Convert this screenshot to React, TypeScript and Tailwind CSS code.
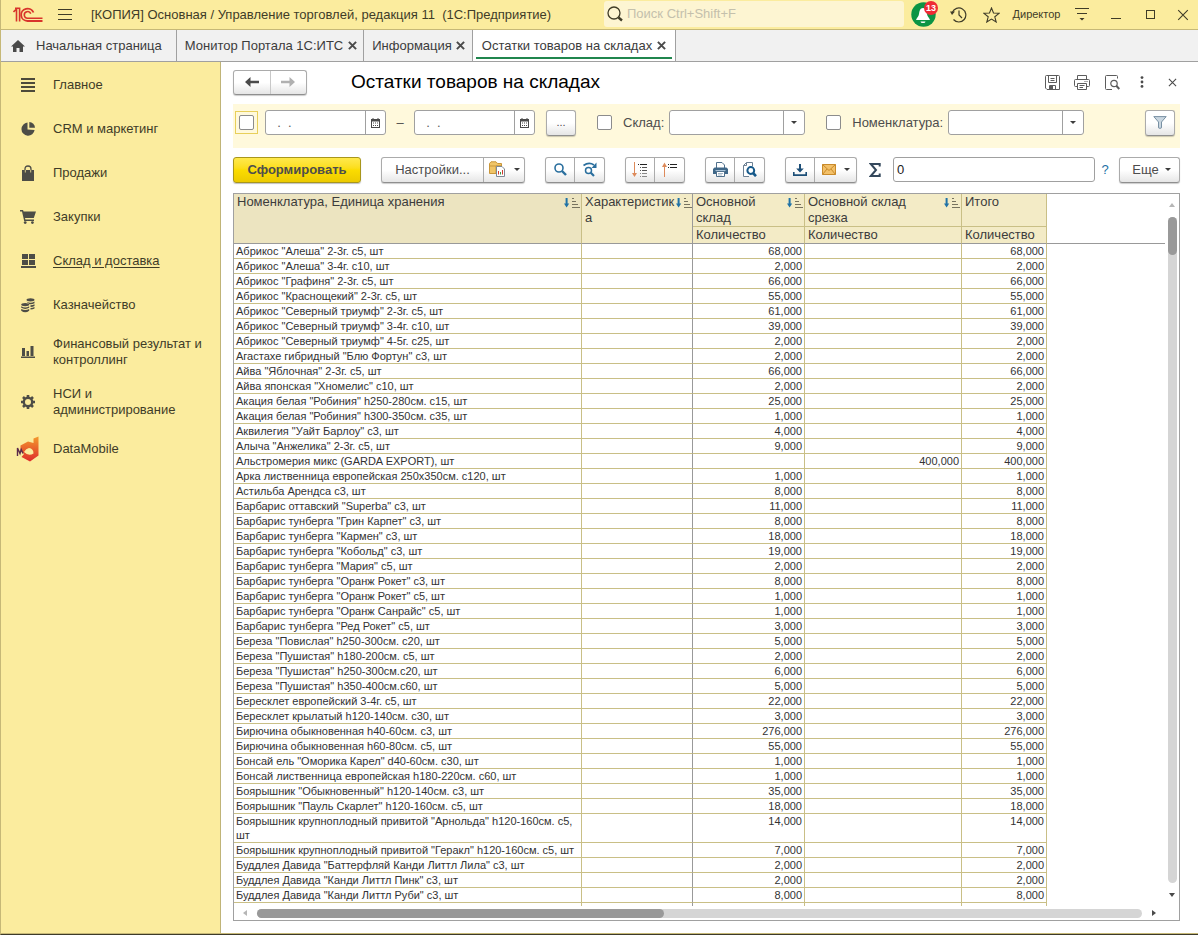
import type { ReactNode } from "react";
import clsx from "clsx";

type Row = [name: string, main: string, cut: string, total: string];

const rows: Row[] = [
  ['Абрикос "Алеша" 2-3г. с5, шт', "68,000", "", "68,000"],
  ['Абрикос "Алеша" 3-4г. с10, шт', "2,000", "", "2,000"],
  ['Абрикос "Графиня" 2-3г. с5, шт', "66,000", "", "66,000"],
  ['Абрикос "Краснощекий" 2-3г. с5, шт', "55,000", "", "55,000"],
  ['Абрикос "Северный триумф" 2-3г. с5, шт', "61,000", "", "61,000"],
  ['Абрикос "Северный триумф" 3-4г. с10, шт', "39,000", "", "39,000"],
  ['Абрикос "Северный триумф" 4-5г. с25, шт', "2,000", "", "2,000"],
  ['Агастахе гибридный "Блю Фортун" с3, шт', "2,000", "", "2,000"],
  ['Айва "Яблочная" 2-3г. с5, шт', "66,000", "", "66,000"],
  ['Айва японская "Хномелис" с10, шт', "2,000", "", "2,000"],
  ['Акация белая "Робиния" h250-280см. с15, шт', "25,000", "", "25,000"],
  ['Акация белая "Робиния" h300-350см. с35, шт', "1,000", "", "1,000"],
  ['Аквилегия "Уайт Барлоу" с3, шт', "4,000", "", "4,000"],
  ['Алыча "Анжелика" 2-3г. с5, шт', "9,000", "", "9,000"],
  ["Альстромерия микс (GARDA EXPORT), шт", "", "400,000", "400,000"],
  ["Арка лиственница европейская 250х350см. с120, шт", "1,000", "", "1,000"],
  ["Астильба Арендса с3, шт", "8,000", "", "8,000"],
  ['Барбарис оттавский "Superba" с3, шт', "11,000", "", "11,000"],
  ['Барбарис тунберга "Грин Карпет" с3, шт', "8,000", "", "8,000"],
  ['Барбарис тунберга "Кармен" с3, шт', "18,000", "", "18,000"],
  ['Барбарис тунберга "Кобольд" с3, шт', "19,000", "", "19,000"],
  ['Барбарис тунберга "Мария" с5, шт', "2,000", "", "2,000"],
  ['Барбарис тунберга "Оранж Рокет" с3, шт', "8,000", "", "8,000"],
  ['Барбарис тунберга "Оранж Рокет" с5, шт', "1,000", "", "1,000"],
  ['Барбарис тунберга "Оранж Санрайс" с5, шт', "1,000", "", "1,000"],
  ['Барбарис тунберга "Ред Рокет" с5, шт', "3,000", "", "3,000"],
  ['Береза "Повислая" h250-300см. с20, шт', "5,000", "", "5,000"],
  ['Береза "Пушистая" h180-200см. с5, шт', "2,000", "", "2,000"],
  ['Береза "Пушистая" h250-300см.с20, шт', "6,000", "", "6,000"],
  ['Береза "Пушистая" h350-400см.с60, шт', "5,000", "", "5,000"],
  ["Бересклет европейский 3-4г. с5, шт", "22,000", "", "22,000"],
  ["Бересклет крылатый h120-140см. с30, шт", "3,000", "", "3,000"],
  ["Бирючина обыкновенная h40-60см. с3, шт", "276,000", "", "276,000"],
  ["Бирючина обыкновенная h60-80см. с5, шт", "55,000", "", "55,000"],
  ['Бонсай ель "Оморика Карел" d40-60см. с30, шт', "1,000", "", "1,000"],
  ["Бонсай лиственница европейская h180-220см. с60, шт", "1,000", "", "1,000"],
  ['Боярышник "Обыкновенный" h120-140см. с3, шт', "35,000", "", "35,000"],
  ['Боярышник "Пауль Скарлет" h120-160см. с5, шт', "18,000", "", "18,000"],
  ['Боярышник крупноплодный привитой "Арнольда" h120-160см. с5, шт', "14,000", "", "14,000"],
  ['Боярышник крупноплодный привитой "Геракл" h120-160см. с5, шт', "7,000", "", "7,000"],
  ['Буддлея Давида "Баттерфляй Канди Литтл Лила" с3, шт', "2,000", "", "2,000"],
  ['Буддлея Давида "Канди Литтл Пинк" с3, шт', "2,000", "", "2,000"],
  ['Буддлея Давида "Канди Литтл Руби" с3, шт', "8,000", "", "8,000"],
  ["", "", "", ""],
];

const buttonFace =
  "border border-[#ababab] border-b-[#8f8f8f] bg-gradient-to-b from-white from-50% to-[#e6e6e6] shadow-[0_1px_1px_rgba(0,0,0,0.2)]";

/* ---------- icons ---------- */

function Logo() {
  return (
    <svg width="30" height="16" viewBox="0 0 30 16" fill="none" stroke="#d8342b">
      <path d="M0.5 5 L3.5 2.2 V14.5 M2 1.2 H6.6 V14.5" strokeWidth="1.6" />
      <path d="M20.5 5.5 A6.4 6.2 0 1 0 14.5 14 H29.5" strokeWidth="1.8" />
      <path d="M17.8 6.6 A3.4 3.3 0 1 0 14.5 11.2 H29.5" strokeWidth="1.6" />
    </svg>
  );
}

function MenuLines() {
  return (
    <svg width="14" height="12" viewBox="0 0 14 12" stroke="#3f3c28" strokeWidth="1">
      <path d="M0 0.5 H14 M0 5.5 H14 M0 10.5 H14" />
    </svg>
  );
}

function SearchGlass() {
  return (
    <svg width="16" height="16" viewBox="0 0 16 16" fill="none" stroke="#3f3c28">
      <circle cx="7" cy="7" r="6" strokeWidth="1.3" />
      <path d="M11.5 11.5 L15 14.5" strokeWidth="2.4" />
    </svg>
  );
}

function Bell() {
  return (
    <svg width="25" height="25" viewBox="0 0 25 25">
      <circle cx="12.5" cy="12.5" r="12.2" fill="#0c9444" />
      <path d="M12 6 C9 6 8.5 9 8 12 C7.6 14.5 6 15.5 5 18 H19 C18 15.5 16.4 14.5 16 12 C15.5 9 15 6 12 6 Z" fill="#fff" />
      <path d="M9.5 19.5 H14.5 A2.5 1.6 0 0 1 9.5 19.5 Z" fill="#fff" />
    </svg>
  );
}

function History() {
  return (
    <svg width="17" height="16" viewBox="0 0 17 16" fill="none" stroke="#3f3c28" strokeWidth="1.2">
      <path d="M2.3 5.5 A7 7 0 1 1 3.5 12.5" />
      <path d="M9 3.5 V8 L12 11" />
      <path d="M0 4.5 L5 4.5 L2 8 Z" fill="#3f3c28" stroke="none" />
    </svg>
  );
}

function Star() {
  return (
    <svg width="17" height="16" viewBox="0 0 17 16" fill="none" stroke="#3f3c28" strokeWidth="1.1">
      <path d="M8.5 1 L10.5 6 L16 6.3 L11.8 9.8 L13.2 15 L8.5 12.1 L3.8 15 L5.2 9.8 L1 6.3 L6.5 6 Z" />
    </svg>
  );
}

function ServiceMenu() {
  return (
    <svg width="14" height="13" viewBox="0 0 14 13" fill="#3f3c28">
      <path d="M0 0 H14 V1 H0 Z M2 5 H12 V6 H2 Z M4.5 10 H9.5 L7 12.5 Z" />
    </svg>
  );
}

function Cross({ size, color, width }: { size: number; color: string; width: number }) {
  return (
    <svg width={size} height={size} viewBox="0 0 10 10" stroke={color} strokeWidth={width}>
      <path d="M1 1 L9 9 M9 1 L1 9" />
    </svg>
  );
}

function HomeIcon() {
  return (
    <svg width="14" height="12" viewBox="0 0 14 12" fill="#4a4a4a">
      <path d="M7 0 L14 6.4 H12 V12 H8.5 V8 H5.5 V12 H2 V6.4 H0 Z" />
    </svg>
  );
}

function Caret({ className }: { className?: string }) {
  return (
    <svg width="6" height="3" viewBox="0 0 6 3" fill="#3c3c3c" className={className}>
      <path d="M0 0 H6 L3 3 Z" />
    </svg>
  );
}

function ScrollArrow({ className }: { className?: string }) {
  return (
    <svg width="6" height="4" viewBox="0 0 6 4" fill="#4a4a4a" className={className}>
      <path d="M0 0 H6 L3 4 Z" />
    </svg>
  );
}

function Arrow({ color, flip }: { color: string; flip?: boolean }) {
  return (
    <svg width="14" height="10" viewBox="0 0 14 10" fill={color} className={flip ? "rotate-180" : ""}>
      <path d="M0 5 L5.5 0 V3.8 H14 V6.2 H5.5 V10 Z" />
    </svg>
  );
}

function SaveDisk() {
  return (
    <svg width="15" height="15" viewBox="0 0 15 15" fill="none" stroke="#5c5c5c">
      <path d="M0.5 1.5 Q0.5 0.5 1.5 0.5 H13.5 Q14.5 0.5 14.5 1.5 V14.5 H2 L0.5 13 Z" />
      <path d="M3.5 0.5 V7.5 H11.5 V0.5 M5.5 3.5 H9.5 M5.5 5.5 H9.5 M4.5 14 V10.5 H10.5 V14" />
      <path d="M5 11 H8 V14 H5 Z" fill="#5c5c5c" stroke="none" />
    </svg>
  );
}

function PrinterOutline() {
  return (
    <svg width="16" height="15" viewBox="0 0 16 15" fill="none" stroke="#5c5c5c">
      <path d="M3.5 4 V0.5 H12.5 V4" />
      <path d="M3 11.5 H1.5 Q0.5 11.5 0.5 10.5 V5.5 Q0.5 4.5 1.5 4.5 H14.5 Q15.5 4.5 15.5 5.5 V10.5 Q15.5 11.5 14.5 11.5 H13" />
      <path d="M3.5 8.5 H12.5 V14.5 H3.5 Z M5.5 10.5 H10.5 M5.5 12.5 H9 M10.5 6.5 H11.5 M12.5 6.5 H13.5" />
    </svg>
  );
}

function PreviewOutline() {
  return (
    <svg width="15" height="15" viewBox="0 0 15 15" fill="none" stroke="#5c5c5c">
      <path d="M7 14.5 H1.5 Q0.5 14.5 0.5 13.5 V1.5 Q0.5 0.5 1.5 0.5 H11.5 Q12.5 0.5 12.5 1.5 V3.5" />
      <circle cx="9" cy="8.5" r="3.2" strokeWidth="1.2" />
      <path d="M11.3 10.8 L14.3 14" strokeWidth="2" />
    </svg>
  );
}

function Dots() {
  return (
    <svg width="4" height="12" viewBox="0 0 4 12" fill="#4a4a4a">
      <circle cx="2" cy="1.6" r="1.4" />
      <circle cx="2" cy="6" r="1.4" />
      <circle cx="2" cy="10.4" r="1.4" />
    </svg>
  );
}

function CalendarIcon() {
  return (
    <svg width="9" height="10" viewBox="0 0 9 10">
      <path d="M0 1 H9 V10 H0 Z M1.5 0 H2.5 V1 H1.5 Z M6.5 0 H7.5 V1 H6.5 Z" fill="#4a4a4a" />
      <path d="M1 3.5 H8 V9 H1 Z" fill="#fff" />
      <path d="M2 5 H7 M2 7.5 H7" stroke="#4a4a4a" strokeDasharray="1 1" />
    </svg>
  );
}

function ReportVariants() {
  return (
    <svg width="17" height="17" viewBox="0 0 17 17">
      <path d="M0.5 2.5 L2 0.8 H7 L8.5 2.5 H12.5 V5 H7 V12.5 H0.5 Z" fill="#f0c568" stroke="#c9963a" />
      <path d="M1 5 H12" stroke="#c9963a" />
      <path d="M7.5 5.5 H13 L15.5 8 V15.5 H7.5 Z" fill="#fff" stroke="#7d8894" />
      <path d="M9.5 10 V13.5 M13.5 9 V13.5" stroke="#d23c2e" />
      <path d="M11.5 11 V13.5" stroke="#3a9a48" />
    </svg>
  );
}

function Find() {
  return (
    <svg width="13" height="13" viewBox="0 0 13 13" fill="none" stroke="#2a6f9e">
      <circle cx="5" cy="5" r="4" strokeWidth="1.6" />
      <path d="M8 8 L12 12" strokeWidth="2.4" />
    </svg>
  );
}

function FindNext() {
  return (
    <svg width="14" height="15" viewBox="0 0 14 15" fill="none" stroke="#2a6f9e">
      <circle cx="5.5" cy="8.5" r="3" strokeWidth="1.5" />
      <path d="M7.8 10.8 L11 14" strokeWidth="2.2" />
      <path d="M0.5 3.5 Q6 -0.5 11 3" strokeWidth="1.6" />
      <path d="M13.5 0.5 V6 H8.5 Z" fill="#2a6f9e" stroke="none" />
    </svg>
  );
}

function ExpandGroups() {
  return (
    <svg width="16" height="16" viewBox="0 0 16 16" fill="none">
      <path d="M2.5 0 V13" stroke="#dd8a5a" />
      <path d="M0 11 H5 L2.5 15 Z" fill="#dd8a5a" />
      <path d="M6 2.5 H7 M8 2.5 H15" stroke="#222" />
      <path d="M8 5.5 H9 M10 5.5 H15 M8 8.5 H9 M10 8.5 H15" stroke="#555" />
      <path d="M8 11.5 H9 M10 11.5 H15 M8 14.5 H9 M10 14.5 H15" stroke="#888" />
    </svg>
  );
}

function CollapseGroups() {
  return (
    <svg width="16" height="16" viewBox="0 0 16 16" fill="none">
      <path d="M2.5 3 V15" stroke="#dd8a5a" />
      <path d="M0 5 H5 L2.5 0.5 Z" fill="#dd8a5a" />
      <path d="M6 2.5 H7 M8 2.5 H15 M6 5.5 H7 M8 5.5 H15" stroke="#222" />
    </svg>
  );
}

function Printer() {
  return (
    <svg width="15" height="15" viewBox="0 0 15 15">
      <path d="M3.5 6 V0.5 H9 L11.5 3 V6" fill="#fff" stroke="#50708c" />
      <path d="M1.5 5.5 H13.5 L15 7 V12 H0 V7 Z" fill="#3f6788" />
      <path d="M2.5 8.5 H12.5" stroke="#a9c2d6" />
      <path d="M3.5 9.5 H11.5 V14.5 H3.5 Z" fill="#fff" stroke="#50708c" />
      <path d="M5 11.5 H10 M5 13 H9" stroke="#8da4b7" strokeWidth="0.8" />
    </svg>
  );
}

function Preview() {
  return (
    <svg width="15" height="15" viewBox="0 0 15 15" fill="none">
      <path d="M7 14.5 H1.5 V3.5 L4.5 0.5 H10.5 V4" fill="#fff" stroke="#6d8194" />
      <path d="M4.5 0.5 V3.5 H1.5" stroke="#6d8194" />
      <circle cx="8.8" cy="8.5" r="3.4" fill="#fff" stroke="#16598a" strokeWidth="2" />
      <path d="M11 11 L14 14.2" stroke="#16598a" strokeWidth="2.6" />
    </svg>
  );
}

function Download() {
  return (
    <svg width="14" height="12" viewBox="0 0 14 12" fill="#1d4f78">
      <path d="M6 0 H8 V4.5 H10.8 L7 8.5 L3.2 4.5 H6 Z" />
      <path d="M0 8 H1.6 V10.2 H12.4 V8 H14 V12 H0 Z" />
    </svg>
  );
}

function Envelope() {
  return (
    <svg width="14" height="11" viewBox="0 0 14 11" fill="none" stroke="#c98a2a">
      <path d="M0.5 0.5 H13.5 V10.5 H0.5 Z" fill="#f3c068" />
      <path d="M0.5 0.5 L7 6.5 L13.5 0.5 M0.5 10.5 L5 5 M13.5 10.5 L9 5" />
    </svg>
  );
}

function Sigma() {
  return (
    <svg width="12" height="14" viewBox="0 0 12 14" fill="none" stroke="#34485c" strokeWidth="2">
      <path d="M10.7 3.5 V1 H1.8 L7 7 L1.8 13 H10.7 V10.5" />
    </svg>
  );
}

function Funnel() {
  return (
    <svg width="14" height="13" viewBox="0 0 14 13" fill="#c9d6e0" stroke="#7890a3">
      <path d="M0.8 0.6 H13.2 L8.5 6 V11.8 Q7 13 5.5 11.8 V6 Z" />
    </svg>
  );
}

function SortMark() {
  return (
    <svg width="16" height="10" viewBox="0 0 16 10" className="mt-1 shrink-0">
      <path d="M1.6 0 H3.6 V5.5 H5.2 L2.6 9.5 L0 5.5 H1.6 Z" fill="#2072a6" />
      <path d="M8 0.5 H10 M8 3.5 H12 M8 6.5 H14 M8 9.5 H16" stroke="#77735f" />
    </svg>
  );
}

function ListGlyph() {
  return (
    <svg width="14" height="14" viewBox="0 0 14 14" stroke="#4d4a3a" strokeWidth="2">
      <path d="M0 1 H14 M0 5 H14 M0 9 H14 M0 13 H14" />
    </svg>
  );
}

function PieGlyph() {
  return (
    <svg width="14" height="14" viewBox="0 0 14 14" fill="#4d4d46">
      <path d="M6.5 0.5 A6.6 6.6 0 1 0 13.6 8 L6.5 7.6 Z" />
      <path d="M8.3 0 A6 6 0 0 1 14 5.7 H8.3 Z" />
    </svg>
  );
}

function BagGlyph() {
  return (
    <svg width="14" height="16" viewBox="0 0 14 16" fill="none">
      <path d="M1 5 H13 V16 H1 Z" fill="#4d4d46" />
      <path d="M4 8 V4 Q4 1 7 1 Q10 1 10 4 V8" stroke="#4d4d46" strokeWidth="1.3" />
      <path d="M4.3 5 V7.5 M9.7 5 V7.5" stroke="#fbec9e" strokeWidth="0.8" />
    </svg>
  );
}

function CartGlyph() {
  return (
    <svg width="16" height="14" viewBox="0 0 16 14" fill="#4d4d46">
      <path d="M0 0 H3 L3.6 1.5 H16 L13.8 8 H5 L5.4 9.5 H14 V11 H4.2 L2 1.5 H0 Z" />
      <circle cx="5.2" cy="12.6" r="1.4" />
      <circle cx="12.4" cy="12.6" r="1.4" />
    </svg>
  );
}

function StockGlyph() {
  return (
    <svg width="15" height="14" viewBox="0 0 15 14" fill="#4d4d46">
      <path d="M1 0 H7 V5 H1 Z M8 0 H14 V5 H8 Z M1 6 H7 V11 H1 Z M8 6 H14 V11 H8 Z M0 12 H15 V14 H0 Z" />
    </svg>
  );
}

function CoinsGlyph() {
  return (
    <svg width="14" height="15" viewBox="0 0 14 15" fill="#4d4d46">
      <ellipse cx="9.5" cy="1.8" rx="4" ry="1.6" />
      <path d="M5.5 3.4 Q9.5 6 13.5 3.4 V5.2 Q11 6.6 8.5 6.2 L7 5 Z M9.5 7.2 Q12 7.2 13.5 6.2 V8 Q12 9 9.5 9 Z M9.5 10 Q12 10 13.5 9 V10.6 Q12 11.6 9.5 11.6 Z" />
      <ellipse cx="4.2" cy="6.6" rx="4" ry="1.6" />
      <path d="M0.2 8.2 Q4.2 10.6 8.2 8.2 V9.8 Q4.2 12 0.2 9.8 Z M0.2 10.9 Q4.2 13.2 8.2 10.9 V12.8 Q4.2 15.8 0.2 12.8 Z" />
    </svg>
  );
}

function BarsGlyph() {
  return (
    <svg width="14" height="12" viewBox="0 0 14 12" fill="#4d4d46">
      <path d="M1 2 H4 V10 H1 Z M5.5 5 H8 V10 H5.5 Z M9.5 0 H12.5 V10 H9.5 Z M0 10.5 H14 V12 H0 Z" />
    </svg>
  );
}

function GearGlyph() {
  return (
    <svg width="14" height="14" viewBox="0 0 14 14" fill="none" stroke="#4d4d46">
      <circle cx="7" cy="7" r="4.2" strokeWidth="2.4" />
      <path
        d="M7 0 V2.4 M7 11.6 V14 M0 7 H2.4 M11.6 7 H14 M2 2 L3.8 3.8 M10.2 10.2 L12 12 M12 2 L10.2 3.8 M3.8 10.2 L2 12"
        strokeWidth="2.6"
      />
    </svg>
  );
}

function DataMobileLogo() {
  return (
    <svg width="24" height="26" viewBox="0 0 24 26">
      <defs>
        <linearGradient id="dm" x1="0" y1="0" x2="0" y2="1">
          <stop offset="0" stopColor="#f39a2d" />
          <stop offset="1" stopColor="#de2b2b" />
        </linearGradient>
      </defs>
      <path
        d="M17.5 2.5 L22.5 0.5 V19.5 L14 25.5 L5.5 21 L8 18 L4.5 14 V9.5 L12 5.5 L17.5 7 Z M8 16 Q12.5 20.5 17.5 17.5 Q17.5 12.5 13 12 Q10 12.5 8 16 Z"
        fill="url(#dm)"
        fillRule="evenodd"
      />
      <path d="M1.5 20 V12 L4 17.5 L5.2 13.5 L7 17.5" fill="none" stroke="#5b2a4a" strokeWidth="1.4" />
    </svg>
  );
}

/* ---------- controls ---------- */

function IconButton({ label, className, children }: { label: string; className: string; children: ReactNode }) {
  return (
    <button type="button" aria-label={label} className={clsx("flex items-center justify-center", className)}>
      {children}
    </button>
  );
}

function ButtonGroup({ children }: { children: ReactNode }) {
  return (
    <div className={clsx("flex h-[26px] shrink-0 divide-x divide-[#ababab] rounded-[3px]", buttonFace)}>
      {children}
    </div>
  );
}

function DateField({ label }: { label: string }) {
  return (
    <div className="flex h-[25px] w-[121px] rounded-[3px] border border-[#a0a0a0] bg-white">
      <input aria-label={label} defaultValue="  .  ." className="min-w-0 flex-1 pl-1 text-[13px] text-[#5c5c5c] outline-none" />
      <IconButton label="Выбрать дату" className="w-5 border-l border-[#a0a0a0]">
        <CalendarIcon />
      </IconButton>
    </div>
  );
}

function FilterSelect({ id, label }: { id: string; label: string }) {
  return (
    <div className="flex items-center">
      <input
        type="checkbox"
        aria-label={`Отбор: ${label}`}
        className="mr-[11px] size-[15px] appearance-none rounded-xs border border-[#8c8c8c] bg-white"
      />
      <label htmlFor={id} className="mr-[5px]">
        {label}:
      </label>
      <div className="relative">
        <select
          id={id}
          className="block h-[25px] w-[136px] appearance-none rounded-[3px] border border-[#a0a0a0] bg-white px-1 outline-none"
        >
          <option value="" />
        </select>
        <span className="pointer-events-none absolute inset-y-px right-px flex w-[21px] items-center justify-center border-l border-[#a0a0a0]">
          <Caret />
        </span>
      </div>
    </div>
  );
}

/* ---------- page parts ---------- */

function TitleBar() {
  return (
    <header className="flex h-[30px] shrink-0 items-center border-b border-[#c6b877] bg-[#fbec9e] text-[#3f3c28]">
      <div className="flex min-w-0 flex-1 items-center pl-3">
        <Logo />
        <IconButton label="Главное меню" className="mr-[19px] ml-[15px]">
          <MenuLines />
        </IconButton>
        <span className="truncate whitespace-pre">
          [КОПИЯ] Основная / Управление торговлей, редакция 11  (1С:Предприятие)
        </span>
      </div>
      <label className="mb-px flex h-[26px] w-[300px] items-center gap-1 rounded-[3px] bg-[#fdf5d2] pl-[3px]">
        <SearchGlass />
        <input
          type="search"
          aria-label="Поиск"
          placeholder="Поиск Ctrl+Shift+F"
          className="min-w-0 flex-1 outline-none placeholder:text-[#c4c0ac]"
        />
      </label>
      <div className="flex h-full items-center">
        <button type="button" aria-label="Уведомления" className="relative flex w-[38px] justify-center">
          <Bell />
          <span className="absolute -top-px right-1 flex size-[14px] items-center justify-center rounded-full bg-[#ee2b34] text-[9px] leading-none font-bold text-white">
            13
          </span>
        </button>
        <IconButton label="История" className="w-[32px]">
          <History />
        </IconButton>
        <IconButton label="Избранное" className="w-[34px]">
          <Star />
        </IconButton>
        <button type="button" className="w-[57px] text-[11px]">
          Директор
        </button>
        <IconButton label="Сервис" className="w-[34px]">
          <ServiceMenu />
        </IconButton>
        <IconButton label="Свернуть" className="w-[34px]">
          <span className="mt-2 h-px w-[10px] bg-[#3f3c28]" />
        </IconButton>
        <IconButton label="Развернуть" className="w-[34px]">
          <span className="size-[9px] border border-[#3f3c28]" />
        </IconButton>
        <IconButton label="Закрыть" className="w-[31px]">
          <Cross size={12} color="#3f3c28" width={0.9} />
        </IconButton>
      </div>
    </header>
  );
}

function Tab({ title, active }: { title: string; active?: boolean }) {
  return (
    <div
      className={clsx(
        "relative flex items-center gap-1 border-r border-[#a0a0a0]",
        active ? "bg-white px-[9px]" : "pr-[6px] pl-2",
      )}
    >
      <a href="#">{title}</a>
      <IconButton label={`Закрыть: ${title}`} className="w-[10px]">
        <Cross size={9} color="#4a4a4a" width={2.2} />
      </IconButton>
      {active && <span className="absolute inset-x-[3px] bottom-[2px] h-[2px] bg-[#20864e]" />}
    </div>
  );
}

function Tabs() {
  return (
    <nav className="flex h-8 shrink-0 border-b border-[#a0a0a0] bg-[#f1f1f1] text-[#3c3c3c]">
      <a href="#" className="flex items-center gap-[11px] border-r border-[#a0a0a0] pr-[14px] pl-[10px]">
        <HomeIcon />
        Начальная страница
      </a>
      <Tab title="Монитор Портала 1С:ИТС" />
      <Tab title="Информация" />
      <Tab title="Остатки товаров на складах" active />
    </nav>
  );
}

const sections: { title: string; icon: ReactNode; current?: boolean }[] = [
  { title: "Главное", icon: <ListGlyph /> },
  { title: "CRM и маркетинг", icon: <PieGlyph /> },
  { title: "Продажи", icon: <BagGlyph /> },
  { title: "Закупки", icon: <CartGlyph /> },
  { title: "Склад и доставка", icon: <StockGlyph />, current: true },
  { title: "Казначейство", icon: <CoinsGlyph /> },
  { title: "Финансовый результат и контроллинг", icon: <BarsGlyph /> },
  { title: "НСИ и администрирование", icon: <GearGlyph /> },
  { title: "DataMobile", icon: <DataMobileLogo /> },
];

function Sidebar() {
  return (
    <aside className="w-[220px] shrink-0 border-r border-[#c0b478] bg-[#fbec9e] pt-px">
      {sections.map((s) => (
        <a key={s.title} href="#" className="flex min-h-11 items-center py-[9px] pr-3 leading-4 text-[#3f3c28]">
          <span className="-my-1 flex w-[52px] shrink-0 justify-center pl-[2px]">{s.icon}</span>
          <span className={clsx(s.current && "underline underline-offset-2")}>{s.title}</span>
        </a>
      ))}
    </aside>
  );
}

function FormHeader() {
  return (
    <div className="flex h-[42px] shrink-0 items-center pr-[11px] pb-[2px]">
      <div className={clsx("flex h-[25px] w-[74px] divide-x divide-[#c8c8c8] rounded-[3px]", buttonFace)}>
        <IconButton label="Назад" className="flex-1">
          <Arrow color="#4a4a4a" />
        </IconButton>
        <IconButton label="Вперед" className="flex-1">
          <Arrow color="#b0b0b0" flip />
        </IconButton>
      </div>
      <h1 className="ml-11 flex-1 text-[19px] text-black">Остатки товаров на складах</h1>
      <IconButton label="Сохранить" className="w-[30px]">
        <SaveDisk />
      </IconButton>
      <IconButton label="Печать" className="w-[30px]">
        <PrinterOutline />
      </IconButton>
      <IconButton label="Предварительный просмотр" className="w-[30px]">
        <PreviewOutline />
      </IconButton>
      <IconButton label="Еще" className="w-[30px]">
        <Dots />
      </IconButton>
      <IconButton label="Закрыть" className="w-[30px]">
        <Cross size={9} color="#4a4a4a" width={1.2} />
      </IconButton>
    </div>
  );
}

function Filters() {
  return (
    <div className="mr-[18px] flex h-11 shrink-0 items-center bg-[#fff9dc] pr-[5px] pb-[7px] pl-[2px] text-[#4d4d4d]">
      <span className="mr-[7px] flex size-[23px] items-center justify-center border border-[#e8cf5a]">
        <input
          type="checkbox"
          aria-label="Период"
          className="size-[15px] appearance-none rounded-xs border border-[#8c8c8c] bg-white"
        />
      </span>
      <DateField label="Начало периода" />
      <span className="w-7 text-center">–</span>
      <DateField label="Конец периода" />
      <button type="button" className={clsx("mr-[21px] ml-[11px] h-[26px] w-[30px] rounded-[3px] text-[11px]", buttonFace)}>
        ...
      </button>
      <FilterSelect id="warehouse" label="Склад" />
      <span className="w-[21px]" />
      <FilterSelect id="item" label="Номенклатура" />
      <IconButton label="Настроить отбор" className={clsx("ml-auto h-[26px] w-[30px] rounded-[3px]", buttonFace)}>
        <Funnel />
      </IconButton>
    </div>
  );
}

function Toolbar() {
  return (
    <div className="flex h-[45px] shrink-0 items-center gap-5 pr-[18px] pb-[2px] text-[#4d4d4d]">
      <button
        type="button"
        className="h-[26px] w-[128px] rounded-[3px] border border-[#a8961c] bg-gradient-to-b from-[#ffe94a] via-[#fbdc00] to-[#ecca00] font-bold shadow-[0_1px_1px_rgba(0,0,0,0.25)]"
      >
        Сформировать
      </button>
      <ButtonGroup>
        <button type="button" className="w-[102px]">
          Настройки...
        </button>
        <IconButton label="Варианты отчета" className="w-10 gap-2">
          <ReportVariants />
          <Caret />
        </IconButton>
      </ButtonGroup>
      <ButtonGroup>
        <IconButton label="Найти" className="w-[29px]">
          <Find />
        </IconButton>
        <IconButton label="Найти следующий" className="w-[29px]">
          <FindNext />
        </IconButton>
      </ButtonGroup>
      <ButtonGroup>
        <IconButton label="Развернуть группы" className="w-[29px]">
          <ExpandGroups />
        </IconButton>
        <IconButton label="Свернуть группы" className="w-[29px]">
          <CollapseGroups />
        </IconButton>
      </ButtonGroup>
      <ButtonGroup>
        <IconButton label="Печать" className="w-[29px]">
          <Printer />
        </IconButton>
        <IconButton label="Просмотр" className="w-[29px]">
          <Preview />
        </IconButton>
      </ButtonGroup>
      <ButtonGroup>
        <IconButton label="Сохранить" className="w-[29px]">
          <Download />
        </IconButton>
        <IconButton label="Отправить" className="w-[41px] gap-2">
          <Envelope />
          <Caret />
        </IconButton>
      </ButtonGroup>
      <div className="flex min-w-0 flex-1 items-center">
        <label htmlFor="sum" aria-label="Сумма" className="mr-3 -ml-2">
          <Sigma />
        </label>
        <input
          id="sum"
          defaultValue="0"
          className="h-[25px] min-w-0 flex-1 rounded-[3px] border border-[#a0a0a0] bg-white px-[3px] text-[#222] outline-none"
        />
        <button type="button" aria-label="Справка" className="-mr-4 w-5 text-[#2072a6]">
          ?
        </button>
      </div>
      <button type="button" className={clsx("flex h-[26px] w-[61px] items-center justify-center gap-[6px] rounded-[3px] pl-1", buttonFace)}>
        Еще
        <Caret />
      </button>
    </div>
  );
}

function HeadCell({ title, titleClass }: { title: string; titleClass?: string }) {
  return (
    <div className="flex justify-between">
      <span className={titleClass}>{title}</span>
      <SortMark />
    </div>
  );
}

function StockTable() {
  const head = "border-r border-b border-[#c9bf86] pl-[3px] text-left align-top font-normal";
  const cell = "border-r border-b border-[#c9bf86] px-[2px] align-top";
  return (
    <table className="w-full table-fixed border-separate border-spacing-0">
      <colgroup>
        <col className="w-[348px]" />
        <col className="w-[111px]" />
        <col className="w-[112px]" />
        <col className="w-[157px]" />
        <col className="w-[85px]" />
        <col />
      </colgroup>
      <thead className="text-[13px] leading-4 text-[#3c3c3c]">
        <tr className="h-[33px]">
          <th rowSpan={2} className={clsx(head, "border-b-[#999] bg-[#ece4c0] pr-px")}>
            <HeadCell title="Номенклатура, Единица хранения" />
          </th>
          <th rowSpan={2} className={clsx(head, "border-r-[#999] border-b-[#999] bg-[#f3ebc6]")}>
            <HeadCell title="Характеристика" titleClass="min-w-0 flex-1 break-all" />
          </th>
          <th className={clsx(head, "bg-[#f3ebc6] pr-px")}>
            <HeadCell title="Основной склад" titleClass="w-20" />
          </th>
          <th className={clsx(head, "bg-[#f3ebc6] pr-px")}>
            <HeadCell title="Основной склад срезка" titleClass="w-28" />
          </th>
          <th className={clsx(head, "bg-[#f3ebc6]")}>Итого</th>
          <td rowSpan={2} className="border-b border-[#999]" />
        </tr>
        <tr className="h-[17px]">
          <th className={clsx(head, "border-b-[#999] bg-[#f3ebc6]")}>Количество</th>
          <th className={clsx(head, "border-b-[#999] bg-[#f3ebc6]")}>Количество</th>
          <th className={clsx(head, "border-b-[#999] bg-[#f3ebc6]")}>Количество</th>
        </tr>
      </thead>
      <tbody className="text-[11px] leading-[14px] text-[#333]">
        {rows.map(([name, main, cut, total]) => (
          <tr key={name} className="h-[15px]">
            <td className={cell}>{name}</td>
            <td className={clsx(cell, "border-r-[#999]")} />
            <td className={clsx(cell, "text-right")}>{main}</td>
            <td className={clsx(cell, "text-right")}>{cut}</td>
            <td className={clsx(cell, "text-right")}>{total}</td>
            <td />
          </tr>
        ))}
      </tbody>
    </table>
  );
}

function ReportArea() {
  return (
    <div className="mr-[18px] mb-3 flex min-h-0 flex-1 flex-col border border-[#a0a0a0]">
      <div className="flex min-h-0 flex-1">
        <div className="min-w-0 flex-1 overflow-hidden">
          <StockTable />
        </div>
        <div className="flex w-[14px] shrink-0 flex-col items-center pt-[9px] pb-[9px]">
          <ScrollArrow className="rotate-180 opacity-40" />
          <div className="my-[10px] w-[9px] flex-1 rounded-full bg-[#d5d5d5]">
            <div className="h-[38px] rounded-full bg-[#999]" />
          </div>
          <ScrollArrow />
        </div>
      </div>
      <div className="flex h-[14px] shrink-0 items-center pr-[22px] pl-2">
        <ScrollArrow className="rotate-90 opacity-40" />
        <div className="mx-[9px] h-[9px] flex-1 rounded-full bg-[#d5d5d5]">
          <div className="h-full w-[46%] rounded-full bg-[#999]" />
        </div>
        <ScrollArrow className="-rotate-90" />
      </div>
    </div>
  );
}

export default function App() {
  return (
    <div className="flex h-screen flex-col overflow-hidden border-b border-l border-b-[#3d3b2a] border-l-[#c6b877] bg-white font-['Liberation_Sans',Arial,sans-serif] text-[13px]">
      <TitleBar />
      <Tabs />
      <div className="flex min-h-0 flex-1 border-b border-[#c6b877]">
        <Sidebar />
        <main className="flex min-w-0 flex-1 flex-col pl-3">
          <FormHeader />
          <Filters />
          <Toolbar />
          <ReportArea />
        </main>
      </div>
    </div>
  );
}
